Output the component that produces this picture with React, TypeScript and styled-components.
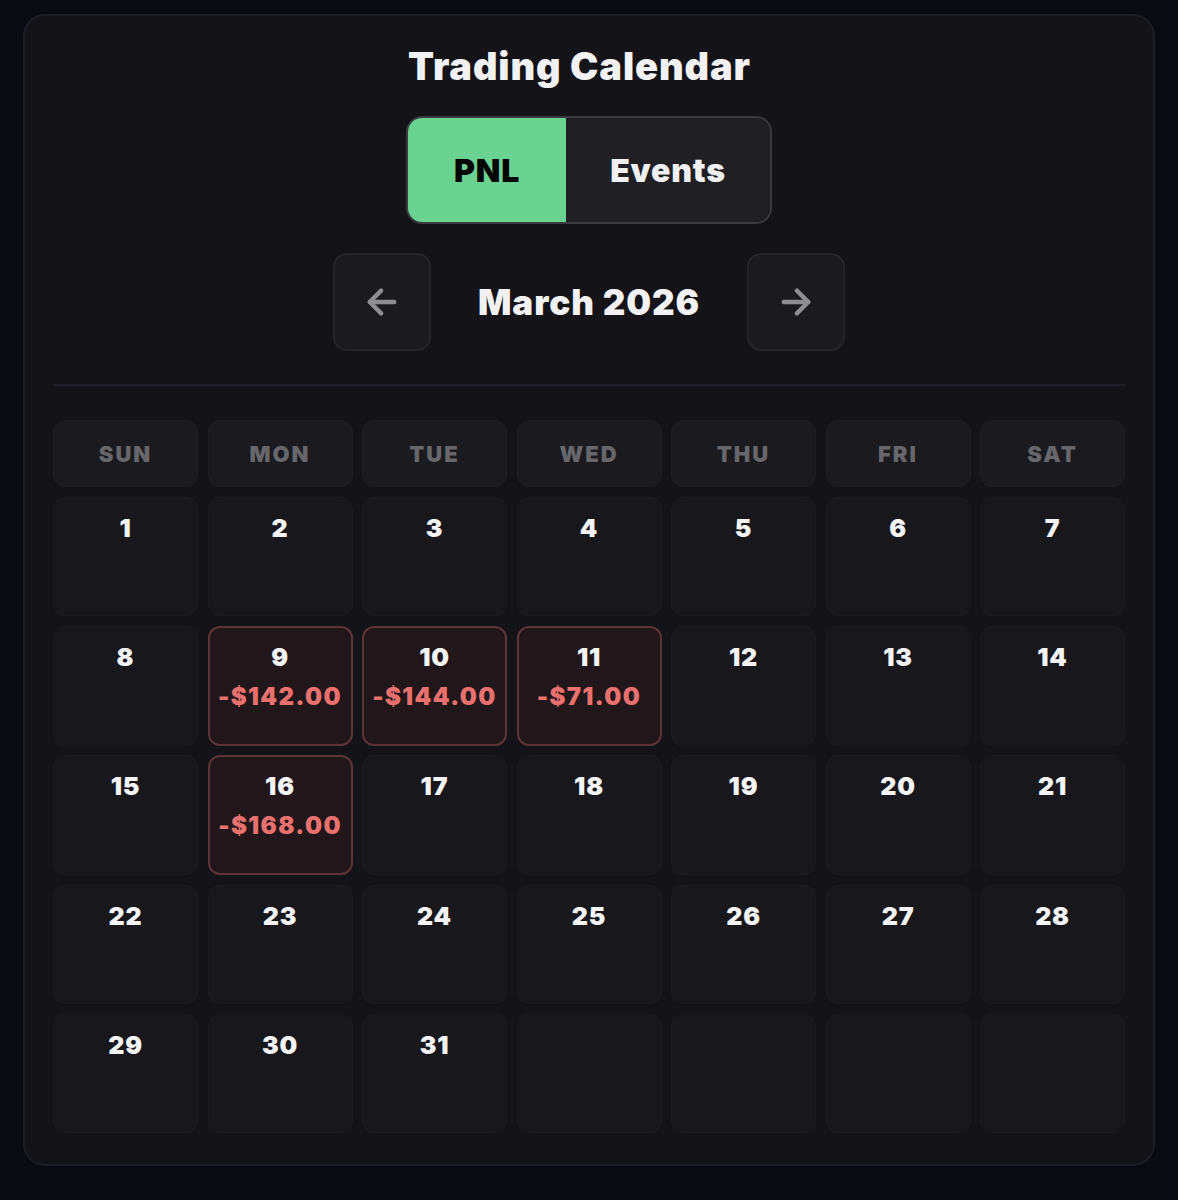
import React from "react";
import styled, { createGlobalStyle } from "styled-components";

const Global = createGlobalStyle`
  html, body { margin: 0; padding: 0; background: #0a0b10; }
  body { font-family: Inter, "Noto Sans", sans-serif; color: #f2f2f4; }
  * { box-sizing: border-box; }
`;

const Page = styled.div`
  padding: 14px 23px 34px 23px;
  min-height: 1200px;
`;

const Card = styled.div`
  background: #131318;
  border: 2px solid #1d1e25;
  border-radius: 22px;
  padding: 24px 28px 31px 28px;
  display: flex;
  flex-direction: column;
  align-items: center;
`;

const Title = styled.h1`
  margin: 0 19px 0 0;
  font-size: 38px;
  font-weight: 900;
  letter-spacing: 0.9px;
  line-height: 52px;
  color: #f2f2f4;
`;

const Toggle = styled.div`
  margin-top: 24px;
  display: flex;
  border: 2px solid #3a3a41;
  border-radius: 16px;
  overflow: hidden;
  height: 108px;
`;

const ToggleBtn = styled.button<{ $active?: boolean; $w: number }>`
  width: ${(p) => p.$w}px;
  border: none;
  font-family: inherit;
  font-size: 32px;
  font-weight: 900;
  letter-spacing: 0.8px;
  background: ${(p) => (p.$active ? "#6bd391" : "#1f1f24")};
  color: ${(p) => (p.$active ? "#050505" : "#f0f0f2")};
  cursor: pointer;
`;

const Nav = styled.div`
  margin-top: 29px;
  display: flex;
  align-items: center;
`;

const NavBtn = styled.button`
  width: 98px;
  height: 98px;
  border-radius: 14px;
  background: #1a1a1f;
  border: 2px solid #24242a;
  display: flex;
  align-items: center;
  justify-content: center;
  color: #8e8e92;
  cursor: pointer;
`;

const Month = styled.div`
  width: 316px;
  text-align: center;
  font-size: 35px;
  font-weight: 900;
  letter-spacing: 0.9px;
  color: #f2f2f4;
`;

const Divider = styled.div`
  align-self: stretch;
  height: 2px;
  background: #1e1f26;
  margin-top: 33px;
`;

const Grid = styled.div`
  align-self: stretch;
  margin-top: 34px;
  display: grid;
  grid-template-columns: repeat(7, 1fr);
  column-gap: 9.5px;
  row-gap: 9.75px;
`;

const HeadCell = styled.div`
  height: 67px;
  border-radius: 12px;
  background: #1a1a1f;
  border: 1px solid #1e1e24;
  display: flex;
  align-items: center;
  justify-content: center;
  font-size: 22px;
  font-weight: 900;
  letter-spacing: 2px;
  color: #66666b;
`;

const DayCell = styled.div<{ $loss?: boolean }>`
  height: 119.5px;
  border-radius: 12px;
  background: ${(p) => (p.$loss ? "#211619" : "#17171c")};
  border: ${(p) => (p.$loss ? "2px solid #5c3539" : "1px solid #1b1b21")};
  display: flex;
  flex-direction: column;
  align-items: center;
  padding-top: ${(p) => (p.$loss ? "14px" : "15px")};
`;

const DayNum = styled.div`
  font-size: 25px;
  font-weight: 900;
  letter-spacing: 0.8px;
  line-height: 30px;
  color: #f4f4f6;
`;

const Pnl = styled.div`
  margin-top: 10px;
  font-size: 24px;
  font-weight: 900;
  line-height: 30px;
  letter-spacing: 1.4px;
  color: #e8716f;
`;

const Arrow = ({ dir }: { dir: "left" | "right" }) => (
  <svg width="42" height="42" viewBox="0 0 24 24" fill="none" stroke="currentColor" strokeWidth="2.5" strokeLinecap="round" strokeLinejoin="round">
    {dir === "left" ? (
      <>
        <path d="M19 12H5" />
        <path d="M11.5 18.5L5 12l6.5-6.5" />
      </>
    ) : (
      <>
        <path d="M5 12h14" />
        <path d="M12.5 5.5L19 12l-6.5 6.5" />
      </>
    )}
  </svg>
);

const days = ["SUN", "MON", "TUE", "WED", "THU", "FRI", "SAT"];
const pnl: Record<number, string> = {
  9: "-$142.00",
  10: "-$144.00",
  11: "-$71.00",
  16: "-$168.00",
};

export default function App() {
  const cells: (number | null)[] = [];
  for (let d = 1; d <= 31; d++) cells.push(d);
  while (cells.length < 35) cells.push(null);
  return (
    <Page>
      <Global />
      <Card>
        <Title>Trading Calendar</Title>
        <Toggle>
          <ToggleBtn $active $w={158}>PNL</ToggleBtn>
          <ToggleBtn $w={204}>Events</ToggleBtn>
        </Toggle>
        <Nav>
          <NavBtn aria-label="Previous month"><Arrow dir="left" /></NavBtn>
          <Month>March 2026</Month>
          <NavBtn aria-label="Next month"><Arrow dir="right" /></NavBtn>
        </Nav>
        <Divider />
        <Grid>
          {days.map((d) => (
            <HeadCell key={d}>{d}</HeadCell>
          ))}
          {cells.map((d, i) => (
            <DayCell key={i} $loss={d !== null && pnl[d] !== undefined}>
              {d !== null && <DayNum>{d}</DayNum>}
              {d !== null && pnl[d] && <Pnl>{pnl[d]}</Pnl>}
            </DayCell>
          ))}
        </Grid>
      </Card>
    </Page>
  );
}
